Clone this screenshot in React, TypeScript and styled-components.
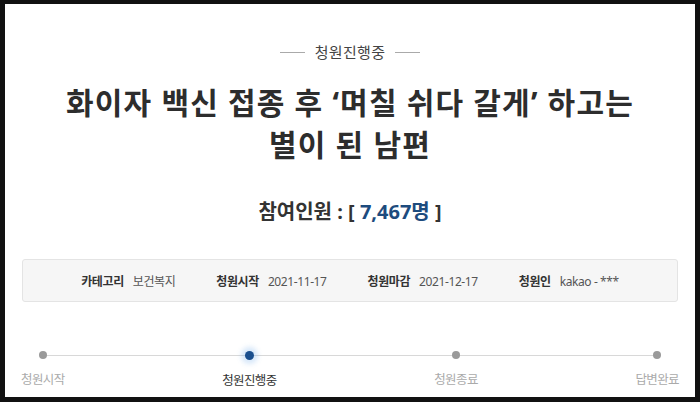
import styled, { createGlobalStyle } from "styled-components"

const GlobalStyle = createGlobalStyle`
    html, body {
        margin: 0;
        padding: 0;
        background: #fff;
    }
    body {
        font-family: "Noto Sans", "Noto Sans CJK KR", sans-serif;
        color: #333;
    }
`

const Frame = styled.div`
    box-sizing: border-box;
    width: 700px;
    height: 402px;
    border: 5px solid #111;
    border-top-width: 4px;
    background: #fff;
    display: flex;
    flex-direction: column;
    align-items: center;
    padding: 38px 16px 0;
`

const Status = styled.div`
    display: flex;
    align-items: center;
    gap: 10px;
    font-size: 15px;
    line-height: 20px;
    color: #444;
    letter-spacing: 0.3px;

    &::before,
    &::after {
        content: "";
        width: 25px;
        height: 1px;
        background: #aaa;
    }
`

const Title = styled.h1`
    margin: 20px 0 0;
    font-size: 30px;
    line-height: 42px;
    font-weight: 700;
    text-align: center;
    color: #2d2d2d;
    letter-spacing: 1.2px;
`

const Count = styled.div`
    margin-top: 33px;
    font-size: 20px;
    line-height: 26px;
    font-weight: 700;
    color: #333;
`

const Number = styled.span`
    color: #1d4b7e;
`

const InfoBox = styled.div`
    box-sizing: border-box;
    align-self: stretch;
    margin: 34px 1px 0;
    height: 43px;
    background: #f6f6f6;
    border: 1px solid #e4e4e4;
    border-radius: 3px;
    display: flex;
    justify-content: center;
    align-items: center;
    gap: 41px;
    font-size: 12px;
    letter-spacing: -0.4px;
`

const InfoItem = styled.div`
    display: flex;
    align-items: baseline;
    gap: 9px;
`

const InfoLabel = styled.span`
    font-weight: 700;
    color: #333;
`

const InfoValue = styled.span`
    color: #555;
`

const Steps = styled.div`
    position: relative;
    align-self: stretch;
    margin: 48px 0 0;
    display: flex;
    justify-content: space-between;

    &::before {
        content: "";
        position: absolute;
        top: 5px;
        left: 22px;
        right: 22px;
        height: 1px;
        background: #d8d8d8;
    }
`

const Step = styled.div<{ $active?: boolean }>`
    display: flex;
    flex-direction: column;
    align-items: center;
    gap: 12px;
    font-size: 12.5px;
    line-height: 18px;
    letter-spacing: -0.6px;
    color: ${(p) => (p.$active ? "#333" : "#aaa")};
`

const Dot = styled.span<{ $active?: boolean }>`
    position: relative;
    margin-top: 1px;
    width: ${(p) => (p.$active ? 9 : 8)}px;
    height: ${(p) => (p.$active ? 9 : 8)}px;
    border-radius: 50%;
    background: ${(p) => (p.$active ? "#1a4f8e" : "#9a9a9a")};
    box-shadow: ${(p) =>
        p.$active ? "0 0 5px 4px rgba(120, 175, 235, 0.3)" : "none"};
`

const info = [
    { label: "카테고리", value: "보건복지" },
    { label: "청원시작", value: "2021-11-17" },
    { label: "청원마감", value: "2021-12-17" },
    { label: "청원인", value: "kakao - ***" },
]

const steps = ["청원시작", "청원진행중", "청원종료", "답변완료"]

export default function App() {
    return (
        <>
            <GlobalStyle />
            <Frame>
                <Status>청원진행중</Status>
                <Title>
                    화이자 백신 접종 후 ‘며칠 쉬다 갈게’ 하고는
                    <br />
                    별이 된 남편
                </Title>
                <Count>
                    참여인원 : [ <Number>7,467명</Number> ]
                </Count>
                <InfoBox>
                    {info.map((item) => (
                        <InfoItem key={item.label}>
                            <InfoLabel>{item.label}</InfoLabel>
                            <InfoValue>{item.value}</InfoValue>
                        </InfoItem>
                    ))}
                </InfoBox>
                <Steps>
                    {steps.map((name, i) => (
                        <Step key={name} $active={i === 1}>
                            <Dot $active={i === 1} />
                            {name}
                        </Step>
                    ))}
                </Steps>
            </Frame>
        </>
    )
}
